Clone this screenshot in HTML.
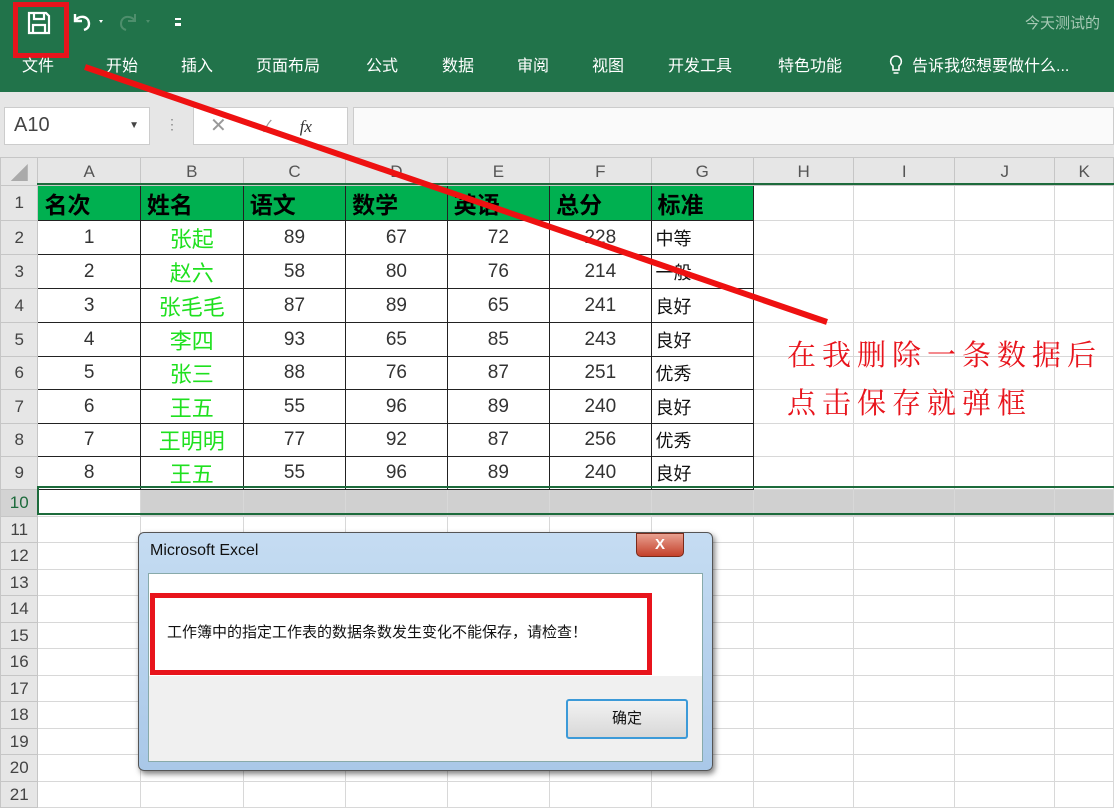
<!DOCTYPE html>
<html><head><meta charset="utf-8"><style>
*{margin:0;padding:0;box-sizing:border-box}
body{width:1114px;height:806px;overflow:hidden;position:relative;background:#fff;font-family:"Liberation Sans","Noto Sans CJK SC",sans-serif}
.abs{position:absolute}
.rib{left:0;top:0;width:1114px;height:92px;background:#21734a}
.tab{top:52px;color:#fff;font-size:16px}
.fbar{left:0;top:92px;width:1114px;height:65px;background:#e6e6e6}
table{position:absolute;left:0;top:157px;border-collapse:collapse;table-layout:fixed}
td{border:1px solid #d8d8d8;font-size:19px;text-align:center;padding:0;overflow:hidden;white-space:nowrap;color:#333}
td.h{background:#e6e6e6;color:#555;font-size:17px;border-color:#c6c6c6}
td.rh{background:#e6e6e6;color:#444;font-size:17px;text-align:center;border-color:#c6c6c6}
tr.d td.c{border:1.5px solid #222}
tr.t td.c{background:#00b050;border:1.5px solid #222;color:#000;font-weight:bold;font-size:23px;text-align:left;padding-left:6px}
td.n{color:#1fe01f;font-size:22px}
td.l{text-align:left;padding-left:4px;font-size:18px;color:#111}
tr.sel td{background:#d0d0d0}
</style></head><body>
<div class="abs rib"></div>
<svg class="abs" style="left:26px;top:10px" width="26" height="26" viewBox="0 0 26 26"><path d="M3 3h17l3 3v17H3z M8 3v6h10V3 M7 23v-8h12v8" fill="none" stroke="#fff" stroke-width="2.2"/></svg>
<div class="abs" style="left:13px;top:2px;width:56px;height:56px;border:5px solid #e8141c"></div>
<svg class="abs" style="left:70px;top:10px" width="40" height="24"><path d="M5 4v7h7 M5 11c3-6 14-6 14 3c0 3-2 5-5 6" fill="none" stroke="#fff" stroke-width="2.4"/><path d="M29 10l4 0l-2 3z" fill="#fff"/></svg>
<svg class="abs" style="left:115px;top:10px" width="45" height="24"><path d="M20 4v7h-7 M20 11c-3-6-14-6-14 3c0 3 2 5 5 6" fill="none" stroke="#4e8e6c" stroke-width="2"/><path d="M31 10l4 0l-2 3z" fill="#4e8e6c"/></svg>
<div class="abs" style="left:175px;top:18px;width:6px;height:8px;border-top:2px solid #fff;border-bottom:3px solid #fff"></div>
<div class="abs" style="left:1025px;top:12px;color:#a7c9b5;font-size:15px;white-space:nowrap">今天测试的</div>
<div class="abs tab" style="left:22px">文件</div>
<div class="abs tab" style="left:106px">开始</div>
<div class="abs tab" style="left:181px">插入</div>
<div class="abs tab" style="left:256px">页面布局</div>
<div class="abs tab" style="left:366px">公式</div>
<div class="abs tab" style="left:442px">数据</div>
<div class="abs tab" style="left:517px">审阅</div>
<div class="abs tab" style="left:592px">视图</div>
<div class="abs tab" style="left:668px">开发工具</div>
<div class="abs tab" style="left:778px">特色功能</div>
<svg class="abs" style="left:888px;top:54px" width="16" height="22"><path d="M8 2a5.5 5.5 0 0 0-3 10v4h6v-4a5.5 5.5 0 0 0-3-10z M5.5 19h5" fill="none" stroke="#fff" stroke-width="1.6"/></svg>
<div class="abs tab" style="left:912px;font-size:16px">告诉我您想要做什么...</div>
<div class="abs fbar"></div>
<div class="abs" style="left:4px;top:107px;width:146px;height:38px;background:#fff;border:1px solid #ccc;font-size:20px;color:#444;padding:6px 0 0 9px">A10<span style="position:absolute;right:10px;top:12px;font-size:10px">▼</span></div>
<div class="abs" style="left:165px;top:116px;color:#888;font-size:14px">⋮</div>
<div class="abs" style="left:193px;top:107px;width:155px;height:38px;background:#fff;border:1px solid #ccc;color:#999;font-size:20px;padding:5px 0 0 16px">✕<span style="margin-left:34px;font-size:16px">✓</span><span style="margin-left:28px;color:#333;font-style:italic;font-family:'Liberation Serif',serif;font-size:17px">fx</span></div>
<div class="abs" style="left:353px;top:107px;width:761px;height:38px;background:#fafafa;border:1px solid #ccc"></div>
<table>
<colgroup><col style="width:38px"><col style="width:104px"><col style="width:104px"><col style="width:104px"><col style="width:103px"><col style="width:104px"><col style="width:103px"><col style="width:104px"><col style="width:103px"><col style="width:104px"><col style="width:103px"><col style="width:60px"></colgroup>
<tr style="height:28px"><td class="h" style="color:#aaa">◢</td><td class="h">A</td><td class="h">B</td><td class="h">C</td><td class="h">D</td><td class="h">E</td><td class="h">F</td><td class="h">G</td><td class="h">H</td><td class="h">I</td><td class="h">J</td><td class="h">K</td></tr>
<tr class="t" style="height:34px"><td class="rh">1</td><td class="c">名次</td><td class="c">姓名</td><td class="c">语文</td><td class="c">数学</td><td class="c">英语</td><td class="c">总分</td><td class="c">标准</td><td></td><td></td><td></td><td></td></tr>
<tr class="d" style="height:34px"><td class="rh">2</td><td class="c">1</td><td class="c n">张起</td><td class="c">89</td><td class="c">67</td><td class="c">72</td><td class="c">228</td><td class="c l">中等</td><td></td><td></td><td></td><td></td></tr>
<tr class="d" style="height:34px"><td class="rh">3</td><td class="c">2</td><td class="c n">赵六</td><td class="c">58</td><td class="c">80</td><td class="c">76</td><td class="c">214</td><td class="c l">一般</td><td></td><td></td><td></td><td></td></tr>
<tr class="d" style="height:34px"><td class="rh">4</td><td class="c">3</td><td class="c n">张毛毛</td><td class="c">87</td><td class="c">89</td><td class="c">65</td><td class="c">241</td><td class="c l">良好</td><td></td><td></td><td></td><td></td></tr>
<tr class="d" style="height:34px"><td class="rh">5</td><td class="c">4</td><td class="c n">李四</td><td class="c">93</td><td class="c">65</td><td class="c">85</td><td class="c">243</td><td class="c l">良好</td><td></td><td></td><td></td><td></td></tr>
<tr class="d" style="height:33px"><td class="rh">6</td><td class="c">5</td><td class="c n">张三</td><td class="c">88</td><td class="c">76</td><td class="c">87</td><td class="c">251</td><td class="c l">优秀</td><td></td><td></td><td></td><td></td></tr>
<tr class="d" style="height:34px"><td class="rh">7</td><td class="c">6</td><td class="c n">王五</td><td class="c">55</td><td class="c">96</td><td class="c">89</td><td class="c">240</td><td class="c l">良好</td><td></td><td></td><td></td><td></td></tr>
<tr class="d" style="height:33px"><td class="rh">8</td><td class="c">7</td><td class="c n">王明明</td><td class="c">77</td><td class="c">92</td><td class="c">87</td><td class="c">256</td><td class="c l">优秀</td><td></td><td></td><td></td><td></td></tr>
<tr class="d" style="height:33px"><td class="rh">9</td><td class="c">8</td><td class="c n">王五</td><td class="c">55</td><td class="c">96</td><td class="c">89</td><td class="c">240</td><td class="c l">良好</td><td></td><td></td><td></td><td></td></tr>
<tr class="sel" style="height:27px"><td class="rh" style="background:#d3d3d3;color:#1d6b3c">10</td><td style="background:#fff"></td><td></td><td></td><td></td><td></td><td></td><td></td><td></td><td></td><td></td><td></td></tr>
<tr style="height:26px"><td class="rh">11</td><td></td><td></td><td></td><td></td><td></td><td></td><td></td><td></td><td></td><td></td><td></td></tr>
<tr style="height:27px"><td class="rh">12</td><td></td><td></td><td></td><td></td><td></td><td></td><td></td><td></td><td></td><td></td><td></td></tr>
<tr style="height:26px"><td class="rh">13</td><td></td><td></td><td></td><td></td><td></td><td></td><td></td><td></td><td></td><td></td><td></td></tr>
<tr style="height:27px"><td class="rh">14</td><td></td><td></td><td></td><td></td><td></td><td></td><td></td><td></td><td></td><td></td><td></td></tr>
<tr style="height:26px"><td class="rh">15</td><td></td><td></td><td></td><td></td><td></td><td></td><td></td><td></td><td></td><td></td><td></td></tr>
<tr style="height:27px"><td class="rh">16</td><td></td><td></td><td></td><td></td><td></td><td></td><td></td><td></td><td></td><td></td><td></td></tr>
<tr style="height:26px"><td class="rh">17</td><td></td><td></td><td></td><td></td><td></td><td></td><td></td><td></td><td></td><td></td><td></td></tr>
<tr style="height:27px"><td class="rh">18</td><td></td><td></td><td></td><td></td><td></td><td></td><td></td><td></td><td></td><td></td><td></td></tr>
<tr style="height:26px"><td class="rh">19</td><td></td><td></td><td></td><td></td><td></td><td></td><td></td><td></td><td></td><td></td><td></td></tr>
<tr style="height:27px"><td class="rh">20</td><td></td><td></td><td></td><td></td><td></td><td></td><td></td><td></td><td></td><td></td><td></td></tr>
<tr style="height:26px"><td class="rh">21</td><td></td><td></td><td></td><td></td><td></td><td></td><td></td><td></td><td></td><td></td><td></td></tr>
</table>
<div class="abs" style="left:37px;top:486px;width:1077px;height:29px;border:2px solid #1d6b3c;border-right:none"></div>
<div class="abs" style="left:37px;top:183px;width:1077px;height:2px;background:#1d6b3c"></div>
<svg class="abs" style="left:0;top:0" width="1114" height="806"><line x1="85" y1="67" x2="827" y2="322" stroke="#ee1111" stroke-width="6"/></svg>
<div class="abs" style="left:787px;top:330px;color:#e8141c;font-size:29px;line-height:48px;letter-spacing:6px;white-space:nowrap;font-family:'Noto Serif CJK SC',serif">在我删除一条数据后<br>点击保存就弹框</div>
<div class="abs" style="left:138px;top:532px;width:575px;height:239px;background:linear-gradient(#c5dcf2,#a9c8e8);border:1px solid #555;border-radius:6px;box-shadow:2px 3px 6px rgba(0,0,0,.5)"></div>
<div class="abs" style="left:150px;top:542px;font-size:16px;color:#111">Microsoft Excel</div>
<div class="abs" style="left:636px;top:533px;width:48px;height:24px;background:linear-gradient(#e8a090,#c4412b);border:1px solid #7a2a1a;border-radius:0 0 5px 5px;color:#fff;font-size:15px;font-weight:bold;text-align:center;line-height:22px">X</div>
<div class="abs" style="left:148px;top:573px;width:555px;height:189px;background:#f0f0f0;border:1px solid #8aa"></div>
<div class="abs" style="left:149px;top:574px;width:553px;height:102px;background:#fff"></div>
<div class="abs" style="left:150px;top:593px;width:502px;height:82px;border:5px solid #e8141c"></div>
<div class="abs" style="left:167px;top:621px;font-size:15px;color:#111">工作簿中的指定工作表的数据条数发生变化不能保存，请检查！</div>
<div class="abs" style="left:566px;top:699px;width:122px;height:40px;border:2px solid #3c9ad8;border-radius:3px;background:linear-gradient(#f2f2f2,#d8d8d8);text-align:center;line-height:36px;font-size:15px;color:#111">确定</div>
</body></html>
